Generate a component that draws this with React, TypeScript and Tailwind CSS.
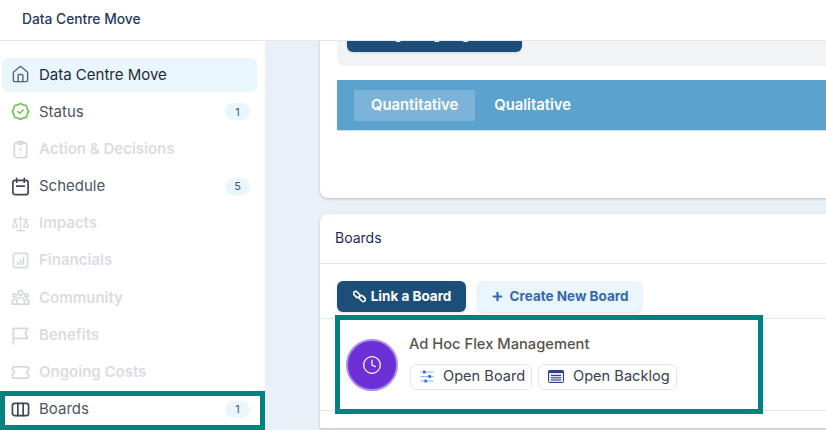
import { Clock, Home, Plus, Scale } from 'lucide-react';
import type { ReactNode } from 'react';

const iconClass = 'h-[19px] w-[19px] shrink-0';

function IconStroke({ children, className }: { children: ReactNode; className?: string }) {
  return (
    <svg viewBox="0 0 20 20" fill="none" stroke="currentColor" strokeWidth="1.8" strokeLinecap="round" strokeLinejoin="round" className={className ?? iconClass}>
      {children}
    </svg>
  );
}

const StatusIcon = () => (
  <IconStroke className="h-[19px] w-[19px] shrink-0 text-[#7ac25a]">
    <path d="M10 1.6l3 1.5 3.2.6.8 3.2 1.6 3.1-1.6 3-.8 3.2-3.2.6-3 1.5-3-1.5-3.2-.6-.8-3.2L1.4 10 3 6.9l.8-3.2L7 3.1z" />
    <path d="M7.2 10.2l2 1.9 3.6-3.6" />
  </IconStroke>
);

const ClipboardIcon = () => (
  <IconStroke>
    <rect x="3.5" y="3" width="13" height="15.5" rx="2" />
    <rect x="7.2" y="1.5" width="5.6" height="3" rx="1" />
    <path d="M10 8.5v2.5M10 14v.2" />
  </IconStroke>
);

const ScheduleIcon = () => (
  <IconStroke>
    <rect x="2" y="3.5" width="16" height="15" rx="2" />
    <path d="M6 1.5v4M14 1.5v4M6 9.5h8" />
  </IconStroke>
);

const FinancialsIcon = () => (
  <IconStroke>
    <rect x="2.5" y="2.5" width="15" height="15" rx="2.5" />
    <path d="M7 14v-2M10 14V9.5M13 14V7" />
  </IconStroke>
);

const CommunityIcon = () => (
  <IconStroke>
    <circle cx="10" cy="5" r="2.5" />
    <circle cx="3.8" cy="8" r="1.8" />
    <circle cx="16.2" cy="8" r="1.8" />
    <path d="M6 17v-3a4 4 0 018 0v3zM6 17H1.2v-2.2A3 3 0 014 12M14 17h4.8v-2.2A3 3 0 0016 12" />
  </IconStroke>
);

const FlagIcon = () => (
  <IconStroke>
    <path d="M2.5 19V2.5h15l-2.5 5 2.5 5.5H2.5" />
  </IconStroke>
);

const TicketIcon = () => (
  <IconStroke>
    <path d="M2.5 4h15a1 1 0 011 1v3a2 2 0 000 4v3a1 1 0 01-1 1h-15a1 1 0 01-1-1v-3a2 2 0 000-4V5a1 1 0 011-1z" />
  </IconStroke>
);

const BoardsIcon = () => (
  <IconStroke>
    <rect x="1.5" y="3.5" width="17" height="13" rx="2.5" />
    <path d="M7.2 3.5v13M12.8 3.5v13" />
  </IconStroke>
);

const ChainIcon = () => (
  <svg viewBox="0 0 14 14" fill="none" stroke="currentColor" strokeWidth="1.8" className="h-[13px] w-[13px] shrink-0">
    <rect x="0.2" y="2.6" width="7.4" height="4.4" rx="2.2" transform="rotate(45 3.9 4.8)" />
    <rect x="6.4" y="7" width="7.4" height="4.4" rx="2.2" transform="rotate(45 10.1 9.2)" />
  </svg>
);

const SlidersIcon = () => (
  <svg viewBox="0 0 14 13" className="h-[13px] w-[14px] shrink-0">
    <path d="M0.5 2h13M0.5 6.5h13M0.5 11h13" stroke="#8fb4e6" strokeWidth="1.2" />
    <rect x="3" y="0.5" width="2.6" height="3" rx="0.6" fill="#3573cf" />
    <rect x="8.4" y="5" width="2.6" height="3" rx="0.6" fill="#3573cf" />
    <rect x="4.4" y="9.5" width="2.6" height="3" rx="0.6" fill="#3573cf" />
  </svg>
);

const BacklogIcon = () => (
  <svg viewBox="0 0 16 13" className="h-[13px] w-4 shrink-0">
    <rect x="0.5" y="0.5" width="15" height="12" rx="1" fill="#dfe3f5" stroke="#2f3f8f" />
    <rect x="0.5" y="0.5" width="15" height="2.5" fill="#2f3f8f" />
    <path d="M3 5.5h10M3 7.8h10M3 10h10" stroke="#2f3f8f" />
  </svg>
);

type NavItem = { label: string; icon: ReactNode; badge?: string; muted?: boolean; active?: boolean };

const navItems: NavItem[] = [
  { label: 'Data Centre Move', icon: <Home className={iconClass} strokeWidth={1.8} />, active: true },
  { label: 'Status', icon: <StatusIcon />, badge: '1' },
  { label: 'Action & Decisions', icon: <ClipboardIcon />, muted: true },
  { label: 'Schedule', icon: <ScheduleIcon />, badge: '5' },
  { label: 'Impacts', icon: <Scale className={iconClass} strokeWidth={1.6} />, muted: true },
  { label: 'Financials', icon: <FinancialsIcon />, muted: true },
  { label: 'Community', icon: <CommunityIcon />, muted: true },
  { label: 'Benefits', icon: <FlagIcon />, muted: true },
  { label: 'Ongoing Costs', icon: <TicketIcon />, muted: true },
  { label: 'Boards', icon: <BoardsIcon />, badge: '1' },
];

function SideLink({ item }: { item: NavItem }) {
  const tone = item.active
    ? 'bg-[#e9f6fe] text-[#1e2a3b]'
    : item.muted
      ? 'text-[#d9dde3]'
      : 'text-[#4b5563]';
  return (
    <div className={`flex h-[34px] items-center rounded-md pl-[9px] pr-[7px] ${tone}`}>
      <span className={`flex w-[28px] shrink-0 ${item.muted ? 'text-[#d5d9df]' : item.active ? 'text-[#5b6675]' : 'text-[#3f4854]'}`}>
        {item.icon}
      </span>
      <span className={`text-[15px] ${item.muted ? 'font-semibold' : ''}`}>{item.label}</span>
      {item.badge && (
        <span className="ml-auto flex h-[17px] min-w-[25px] items-center justify-center rounded-full bg-[#e9f6fe] px-2 text-[11px] text-[#475569]">
          {item.badge}
        </span>
      )}
    </div>
  );
}

export default function App() {
  return (
    <div className="relative flex h-[430px] w-[826px] flex-col overflow-hidden bg-white font-['Inter',sans-serif]">
      <header className="flex h-[41px] shrink-0 items-center border-b border-[#e5e7eb] bg-white pb-[2px] pl-[22px] text-[13.8px] font-medium text-[#1f3a5f]">
        Data Centre Move
      </header>
      <div className="flex min-h-0 flex-1">
        <aside className="flex w-[265px] shrink-0 flex-col gap-[3.2px] bg-white pl-[2px] pr-[8px] pt-[16.8px]">
          {navItems.map((item) => (
            <SideLink key={item.label} item={item} />
          ))}
        </aside>
        {/* page is scrolled: the first card starts above the header */}
        <main className="min-w-0 flex-1 overflow-hidden bg-[#e9f0f7] pl-[55px]">
          <section className="-mt-[30px] h-[187px] w-[600px] rounded-bl-lg bg-white px-[17px] shadow-[0_1px_3px_rgba(0,0,0,0.2)]">
            <div className="h-[55px] w-full rounded-bl-lg bg-[#f1f3f5] pl-[10px] pt-[10px]">
              <div className="flex h-[31px] w-[175px] items-center justify-center rounded-md bg-[#1b4f7a] pb-[4px] text-[13.5px] font-bold text-white shadow-sm">
                Manage Ongoing Costs
              </div>
            </div>
            <div className="mt-[14px] flex h-[51px] items-center gap-[19px] border-b border-[#d9dee3] bg-[#5ba2cf] pl-[17px] text-[14.8px] font-semibold text-white">
              <span className="h-[31px] rounded-[2px] bg-[#7cb3d8] px-[17px] leading-[31px]">Quantitative</span>
              <span>Qualitative</span>
            </div>
          </section>
          <section className="mt-[16px] h-[214px] w-[600px] rounded-tl-lg bg-white shadow-[0_1px_3px_rgba(0,0,0,0.2)]">
            <div className="flex h-[50px] items-center border-b border-[#e5e7eb] pb-[2px] pl-[15px] text-[14px] text-[#1e2a5a]">
              Boards
            </div>
            <div className="flex gap-[11px] pl-[17px] pt-[17px]">
              <button className="flex h-[31px] w-[129px] items-center justify-center gap-[5px] rounded-md bg-[#1b4f7a] pl-[1px] text-[13.5px] font-bold text-white shadow-sm">
                <ChainIcon />
                Link a Board
              </button>
              <button className="flex h-[31px] w-[165px] items-center justify-center gap-[6px] rounded-md bg-[#e9f6fe] text-[13.5px] font-bold text-[#3568ac] shadow-sm">
                <Plus className="h-[13px] w-[13px]" strokeWidth={4} />
                Create New Board
              </button>
            </div>
            <div className="mt-[6px] flex h-[93px] items-center gap-[10px] border-y border-[#e5e7eb] pl-[26px]">
              <div className="flex h-[52px] w-[52px] items-center justify-center rounded-full border-2 border-[#a78bf0] bg-[#6d2fd6] text-white">
                <Clock className="h-5 w-5" strokeWidth={1.5} />
              </div>
              <div className="pb-[6px]">
                <div className="pl-[1px] text-[14.7px] font-medium leading-[20px] text-[#57534e]">Ad Hoc Flex Management</div>
                <div className="mt-[10px] flex gap-[6px] pl-[2px]">
                  <button className="flex h-[26px] w-[122px] items-center gap-[9px] rounded-md border border-[#e2e5ea] bg-white pl-[9px] text-[14.6px] text-[#374151]">
                    <SlidersIcon />
                    Open Board
                  </button>
                  <button className="flex h-[26px] w-[139px] items-center gap-[9px] rounded-md border border-[#e2e5ea] bg-white pl-[9px] text-[14.6px] text-[#374151]">
                    <BacklogIcon />
                    Open Backlog
                  </button>
                </div>
              </div>
            </div>
          </section>
        </main>
      </div>
      {/* teal highlight boxes drawn over the page */}
      <div className="pointer-events-none absolute left-0 top-[391px] h-[39px] w-[265px] border-[5px] border-[#00827f]" />
      <div className="pointer-events-none absolute left-[335px] top-[315px] h-[99px] w-[428px] border-[5px] border-[#00827f]" />
    </div>
  );
}
